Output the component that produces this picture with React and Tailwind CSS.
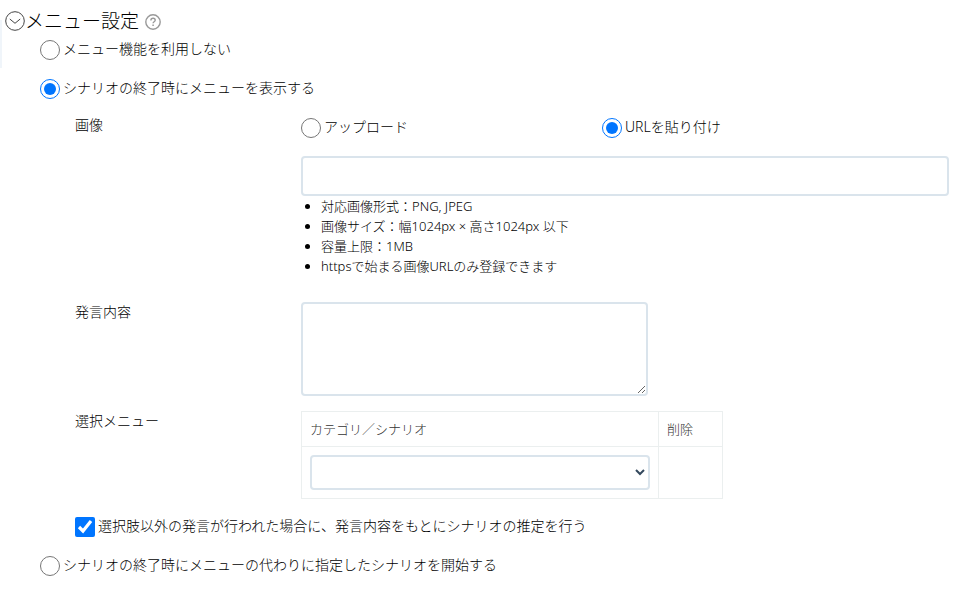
import React, { useState } from 'react';

const FORMAT_NOTES = [
  '対応画像形式：PNG, JPEG',
  '画像サイズ：幅1024px × 高さ1024px 以下',
  '容量上限：1MB',
  'httpsで始まる画像URLのみ登録できます',
];

const fieldClass = 'block rounded-sm border-2 border-[#dae4ec] bg-white px-2 text-sm text-[#34495e]';

const Radio = ({ name, value, current, onChange, children }) => (
  <label className="flex h-5 items-center gap-[3px]">
    <input
      type="radio"
      name={name}
      value={value}
      checked={current === value}
      onChange={() => onChange(value)}
      className="size-5 shrink-0"
    />
    <span className="pb-0.5">{children}</span>
  </label>
);

const ChevronCircle = () => (
  <svg viewBox="0 0 20 20" className="size-5" fill="none" stroke="#444" aria-hidden="true">
    <circle cx="10" cy="10" r="9.3" strokeWidth="1" />
    <path d="M4.8 8l5.2 4.3L15.2 8" strokeWidth="1" />
  </svg>
);

const HelpCircle = () => (
  <svg viewBox="0 0 16 16" className="size-4" fill="none" stroke="#999" aria-hidden="true">
    <circle cx="8" cy="8" r="7.2" strokeWidth="1.4" />
    <path d="M5.9 6.4c0-1.3 1-2.1 2.2-2.1s2.1.8 2.1 1.9c0 1.5-2.1 1.6-2.1 3.1" strokeWidth="1.4" />
    <path d="M8.1 10.5v1.5" strokeWidth="1.5" />
  </svg>
);

const App = () => {
  const [open, setOpen] = useState(true);
  const [mode, setMode] = useState('show');
  const [source, setSource] = useState('url');
  const [guess, setGuess] = useState(true);

  return (
    <main className="relative bg-white pt-2 pr-5 pb-3 pl-[5px] font-['Noto_Sans','Noto_Sans_CJK_JP',sans-serif] text-sm font-light text-black">
      <div className="absolute top-5 left-0 h-12 w-0.5 bg-[#f0f5fa]" />

      <header className="flex h-[26px] items-center">
        <button type="button" aria-label="開閉" onClick={() => setOpen(!open)}>
          <ChevronCircle />
        </button>
        <h2 className="text-[19px] leading-6">メニュー設定</h2>
        <button type="button" aria-label="ヘルプ" className="ml-1.5 pt-0.5">
          <HelpCircle />
        </button>
      </header>

      {open && (
        <div className="mt-1.5 pl-[35px]">
          <Radio name="mode" value="none" current={mode} onChange={setMode}>
            メニュー機能を利用しない
          </Radio>
          <div className="mt-[19px]">
            <Radio name="mode" value="show" current={mode} onChange={setMode}>
              シナリオの終了時にメニューを表示する
            </Radio>
          </div>

          <div className="mt-4 pl-[35px]">
            <div className="grid grid-cols-[226px_1fr]">
              <label htmlFor="image-url">画像</label>
              <div className="pt-[3px]">
                <div className="grid max-w-[602px] grid-cols-2">
                  <Radio name="source" value="upload" current={source} onChange={setSource}>
                    アップロード
                  </Radio>
                  <Radio name="source" value="url" current={source} onChange={setSource}>
                    URLを貼り付け
                  </Radio>
                </div>
                <input id="image-url" type="text" className={`${fieldClass} mt-[18px] h-10 w-full`} />
                <ul className="list-disc pl-5 text-[13px] leading-5">
                  {FORMAT_NOTES.map((note) => (
                    <li key={note}>{note}</li>
                  ))}
                </ul>
              </div>
            </div>

            <div className="mt-[26px] grid grid-cols-[226px_1fr]">
              <label htmlFor="message">発言内容</label>
              <textarea id="message" className={`${fieldClass} h-[94px] w-full max-w-[347px] resize`} />
            </div>

            <div className="mt-[15px] grid grid-cols-[226px_1fr]">
              <span>選択メニュー</span>
              <table className="w-full max-w-[422px] table-fixed border-collapse text-[13px] leading-5 text-[#333]">
                <thead>
                  <tr className="h-[35px]">
                    <th className="border border-[#ebefef] px-2 text-left font-light">カテゴリ／シナリオ</th>
                    <th className="w-16 border border-[#ebefef] px-2 text-left font-light">削除</th>
                  </tr>
                </thead>
                <tbody>
                  <tr>
                    <td className="border border-[#ebefef] p-2">
                      <select aria-label="カテゴリ／シナリオ" className={`${fieldClass} h-[35px] w-full`}>
                        <option value="" />
                      </select>
                    </td>
                    <td className="border border-[#ebefef] p-2" />
                  </tr>
                </tbody>
              </table>
            </div>

            <label className="mt-[18px] flex h-5 items-center gap-[3px]">
              <input
                type="checkbox"
                checked={guess}
                onChange={(e) => setGuess(e.target.checked)}
                className="size-5 shrink-0"
              />
              <span className="pb-0.5">選択肢以外の発言が行われた場合に、発言内容をもとにシナリオの推定を行う</span>
            </label>
          </div>

          <div className="mt-[19px]">
            <Radio name="mode" value="replace" current={mode} onChange={setMode}>
              シナリオの終了時にメニューの代わりに指定したシナリオを開始する
            </Radio>
          </div>
        </div>
      )}
    </main>
  );
};

export default App;
